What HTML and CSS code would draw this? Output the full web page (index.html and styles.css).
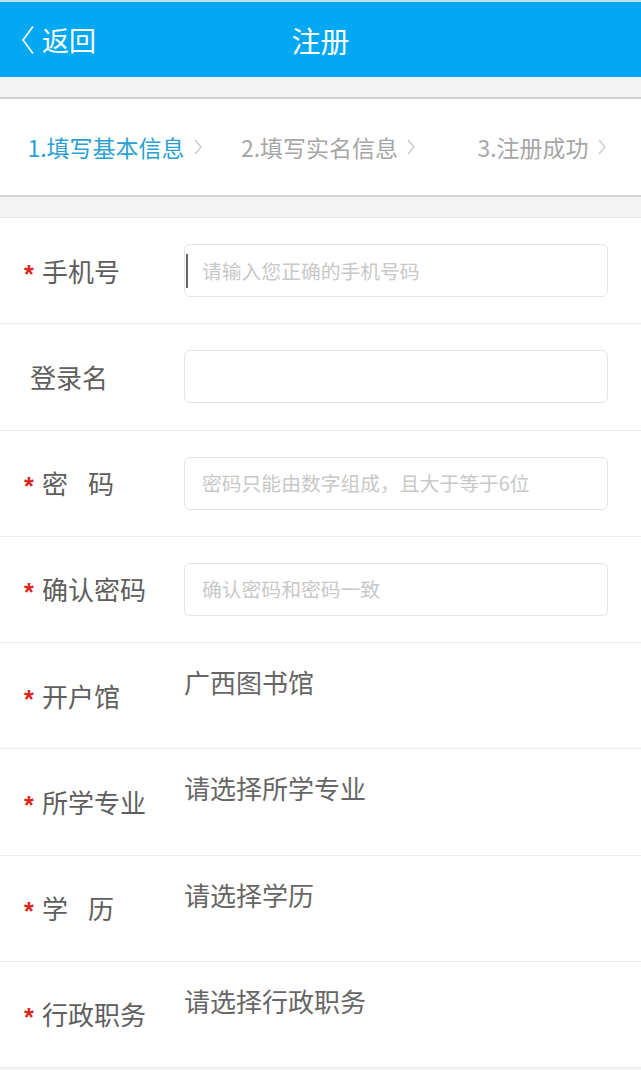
FILE: index.html
```html
<!DOCTYPE html>
<html lang="zh-CN">
<head>
<meta charset="utf-8">
<title>注册</title>
<link rel="stylesheet" href="styles.css">
</head>
<body>
<div class="strip"></div>
<header class="topbar">
  <div class="back">
    <svg class="back-icon" width="14" height="30" viewBox="0 0 14 30"><polyline points="12,1.5 2,15 12,28.5" fill="none" stroke="#fff" stroke-width="1.6"/></svg>
    <span>返回</span>
  </div>
  <div class="title">注册</div>
  <div></div>
</header>
<div class="band"></div>
<nav class="steps">
  <div class="step"><span class="step-text active">1.填写基本信息</span><svg class="chev" width="10" height="18" viewBox="0 0 10 18"><polyline points="2,2 8,9 2,16" fill="none" stroke="#c9c9c9" stroke-width="1.3"/></svg></div>
  <div class="step"><span class="step-text">2.填写实名信息</span><svg class="chev" width="10" height="18" viewBox="0 0 10 18"><polyline points="2,2 8,9 2,16" fill="none" stroke="#c9c9c9" stroke-width="1.3"/></svg></div>
  <div class="step"><span class="step-text">3.注册成功</span><svg class="chev" width="10" height="18" viewBox="0 0 10 18"><polyline points="2,2 8,9 2,16" fill="none" stroke="#c9c9c9" stroke-width="1.3"/></svg></div>
</nav>
<div class="band band-bottom"></div>
<main class="form">
  <div class="row">
    <label class="label"><span class="star">*</span>手机号</label>
    <div class="input"><span class="cursor"></span><span class="ph">请输入您正确的手机号码</span></div>
  </div>
  <div class="row">
    <label class="label"><span class="star none"></span>登录名</label>
    <div class="input"></div>
  </div>
  <div class="row">
    <label class="label"><span class="star">*</span>密<span class="sp"></span>码</label>
    <div class="input"><span class="ph">密码只能由数字组成，且大于等于6位</span></div>
  </div>
  <div class="row">
    <label class="label"><span class="star">*</span>确认密码</label>
    <div class="input"><span class="ph">确认密码和密码一致</span></div>
  </div>
  <div class="row">
    <label class="label"><span class="star">*</span>开户馆</label>
    <div class="value">广西图书馆</div>
  </div>
  <div class="row">
    <label class="label"><span class="star">*</span>所学专业</label>
    <div class="value">请选择所学专业</div>
  </div>
  <div class="row">
    <label class="label"><span class="star">*</span>学<span class="sp"></span>历</label>
    <div class="value">请选择学历</div>
  </div>
  <div class="row">
    <label class="label"><span class="star">*</span>行政职务</label>
    <div class="value">请选择行政职务</div>
  </div>
</main>
</body>
</html>
```
FILE: styles.css
```css
* { box-sizing: border-box; }
html, body { margin: 0; padding: 0; }
body {
  background: #f3f3f3;
  font-family: "Noto Sans CJK SC", "Noto Sans", sans-serif;
  width: 641px;
  min-height: 1070px;
}
.strip { height: 2px; background: #bfe3f3; }
.topbar {
  height: 75px;
  background: #03a8f2;
  color: #fff;
  display: grid;
  grid-template-columns: 1fr auto 1fr;
  align-items: center;
}
.back {
  display: flex;
  align-items: center;
  padding-left: 21px;
  font-size: 27px;
  line-height: 30px;
}
.back-icon { margin-right: 7px; }
.title { font-size: 29px; line-height: 32px; }
.band { height: 20px; background: #f3f3f3; }
.band-bottom { height: 21px; border-bottom: 1px solid #e6e6e6; }
.steps {
  height: 100px;
  background: #fff;
  border-top: 2px solid #d2d2d2;
  border-bottom: 2px solid #d2d2d2;
  display: grid;
  grid-template-columns: 214px 213px 214px;
  align-items: center;
}
.step {
  display: flex;
  justify-content: center;
  align-items: center;
  padding-left: 16px;
}
.step-text { font-size: 23px; line-height: 30px; color: #a6a6a6; }
.step-text.active { color: #2a9fd2; }
.chev { margin-left: 8px; }
.form { background: #fff; }
.row {
  height: 106.25px;
  border-bottom: 1px solid #ececec;
  display: flex;
  align-items: center;
  padding-left: 24px;
}
.label {
  width: 160px;
  display: flex;
  align-items: center;
  font-size: 26px;
  line-height: 30px;
  color: #5e5e5e;
}
.star {
  width: 18px;
  height: 30px;
  color: #d8261e;
  font-family: "Liberation Sans", sans-serif;
  font-weight: bold;
  font-size: 25px;
  line-height: 36px;
}
.star.none { width: 6px; }
.sp { display: inline-block; width: 20px; }
.input {
  width: 424px;
  height: 53px;
  border: 1px solid #e4e4e4;
  border-radius: 6px;
  display: flex;
  align-items: center;
  padding-left: 17px;
  position: relative;
}
.cursor {
  position: absolute;
  left: 1px;
  top: 9px;
  width: 2px;
  height: 34px;
  background: #666;
}
.ph { font-size: 19.8px; color: #c8c8c8; line-height: 24px; }
.value {
  align-self: flex-start;
  padding-top: 24px;
  font-size: 26px;
  line-height: 30px;
  color: #666;
}
```
